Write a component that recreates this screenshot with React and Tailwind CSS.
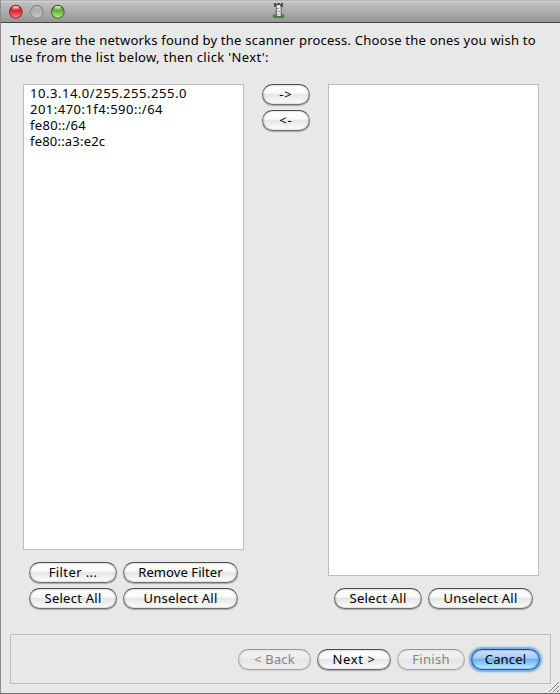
import React from "react";

const variants = {
  normal: "border-[#707070] border-t-[#4c4c4c] text-black bg-[linear-gradient(#ffffff_0%,#fafafa_42%,#e6e6e6_50%,#f2f2f2_75%,#ffffff_100%)] shadow-[0_1px_1px_rgba(0,0,0,0.28),inset_0_0_2px_rgba(0,0,0,0.4)]",
  disabled: "border-[#aaaaaa] border-t-[#989898] text-[#858585] bg-[linear-gradient(#f1f1f1_0%,#eeeeee_42%,#e5e5e5_50%,#ebebeb_75%,#f2f2f2_100%)] shadow-[0_1px_1px_rgba(0,0,0,0.12),inset_0_0_2px_rgba(0,0,0,0.15)]",
  focused: "border-[#2f5da6] border-t-[#2344a8] text-black bg-[linear-gradient(#d3e5fa_0%,#a5cbf5_42%,#6fb0f3_50%,#94cffb_75%,#c8f8ff_100%)] shadow-[0_0_2px_2px_#78a9dc,inset_0_0_2px_#2a5fbb]",
};

function Button({ children, width, variant = "normal", text = "" }) {
  return (
    <button
      disabled={variant === "disabled"}
      className={`flex h-[21px] shrink-0 items-center justify-center rounded-full border pb-[2px] whitespace-pre ${width} ${variants[variant]}`}
    >
      <span className={text}>{children}</span>
    </button>
  );
}

function Light({ color }) {
  return (
    <svg className="h-[15px] w-[15px]" viewBox="0 0 15 15">
      <defs>
        <linearGradient id={`${color.name}-body`} x1="0" y1="0" x2="0" y2="1">
          <stop offset="0" stopColor={color.dark} />
          <stop offset="0.5" stopColor={color.mid} />
          <stop offset="1" stopColor={color.light} />
        </linearGradient>
        <linearGradient id={`${color.name}-shine`} x1="0" y1="0" x2="0" y2="1">
          <stop offset="0" stopColor="#fff" stopOpacity={color.shine} />
          <stop offset="1" stopColor="#fff" stopOpacity="0" />
        </linearGradient>
      </defs>
      <circle cx="7.8" cy="8.2" r="6.8" fill="#fff" opacity="0.3" />
      <circle cx="7.8" cy="7.8" r="6.4" fill={`url(#${color.name}-body)`} stroke={color.edge} strokeWidth="1.1" />
      <ellipse cx="7.8" cy="4.3" rx="3.5" ry="2.3" fill={`url(#${color.name}-shine)`} />
    </svg>
  );
}

const lights = [
  { name: "close", dark: "#a60e18", mid: "#e92c34", light: "#ff8585", edge: "#8a3038", shine: 0.95 },
  { name: "minimize", dark: "#a0a0a0", mid: "#b1b1b1", light: "#c9c9c9", edge: "#858585", shine: 0.3 },
  { name: "zoom", dark: "#397c18", mid: "#70b93a", light: "#c4f27e", edge: "#3e6a2b", shine: 0.95 },
];

function TowerIcon() {
  return (
    <svg className="h-[17px] w-[14px]" viewBox="0 0 14 17">
      <path d="M2 1h2v1h1V1h3v1h1V1h2v4H2z" fill="#505050" />
      <path d="M4 4h5l1 10H3z" fill="#bcbcbc" />
      <path d="M4 5h1v9H3z" fill="#777" />
      <path d="M5 3h3v11H5z" fill="#e4e4e4" />
      <path d="M9 5h1v9H9z" fill="#777" />
      <path d="M5 6h2v1H5zM6 9h2v1H6zM5 12h2v1H5z" fill="#999" />
      <path d="M2 14h9v2H2z" fill="#626a5d" />
      <circle cx="2.5" cy="14" r="1.8" fill="#318c22" />
      <circle cx="10.8" cy="14" r="1.8" fill="#318c22" />
    </svg>
  );
}

const networks = [
  { label: "10.3.14.0/255.255.255.0", tracking: "tracking-[0.53px]" },
  { label: "201:470:1f4:590::/64", tracking: "tracking-[0.48px]" },
  { label: "fe80::/64", tracking: "tracking-[0.3px]" },
  { label: "fe80::a3:e2c", tracking: "tracking-[0.2px]" },
];

export default function App() {
  return (
    <div className="flex h-[694px] w-[560px] flex-col overflow-hidden border-b border-l border-b-[#6a6a6a] border-l-[#8d8d8d] bg-[#e8e8e8] font-['Noto_Sans','Open_Sans',sans-serif] text-[13px] leading-4 text-black">
      <header className="grid h-[23px] shrink-0 grid-cols-[271px_14px_1fr] items-start border-t border-b border-t-[#b5b5b5] border-b-[#454545] bg-[linear-gradient(#d5d5d5_0px,#bfbfbf_2px,#969696_21px)]">
        <div className="flex gap-[6px] pt-[3px] pl-[7px]">
          {lights.map((color) => <Light key={color.name} color={color} />)}
        </div>
        <div className="pt-px"><TowerIcon /></div>
      </header>

      <p className="mt-[9px] ml-[9px] h-[34px] leading-[17px] whitespace-nowrap">
        <span className="tracking-[0.225px]">These are the networks found by the scanner process. Choose the ones you wish to</span>
        <br />
        <span className="tracking-[0.335px]">use from the list below, then click 'Next':</span>
      </p>

      <main className="mt-[18px] flex h-[526px] shrink-0 pl-[22px]">
        <section className="w-[221px]">
          <ul className="h-[466px] border border-[#bdbdbd] bg-white pl-[6px]">
            {networks.map((network) => (
              <li key={network.label} className="h-4 whitespace-nowrap"><span className={network.tracking}>{network.label}</span></li>
            ))}
          </ul>
          <div className="mt-[12px] ml-[6px] flex flex-wrap gap-x-[6px] gap-y-[5px]">
            <Button width="w-[88px]" text="tracking-[0.4px]">Filter ...</Button>
            <Button width="w-[115px]" text="tracking-[0.08px]">Remove Filter</Button>
            <Button width="w-[88px]" text="tracking-[0.25px]">Select All</Button>
            <Button width="w-[115px]" text="tracking-[0.25px]">Unselect All</Button>
          </div>
        </section>
        <div className="ml-[18px] flex flex-col gap-[5px]">
          <Button width="w-[48px]" text="tracking-[1px]">-&gt;</Button>
          <Button width="w-[48px]" text="tracking-[1px]">&lt;-</Button>
        </div>
        <section className="ml-[18px] w-[211px]">
          <div className="h-[492px] border border-[#bdbdbd] bg-white" />
          <div className="mt-[12px] ml-[6px] flex gap-[6px]">
            <Button width="w-[88px]" text="tracking-[0.25px]">Select All</Button>
            <Button width="w-[105px]" text="tracking-[0.25px]">Unselect All</Button>
          </div>
        </section>
      </main>

      <footer className="mt-[24px] ml-[9px] flex h-[50px] w-[541px] shrink-0 justify-end gap-[6px] border border-[#bdbdbd] pt-[14px] pr-[10px]">
        <Button width="w-[73px]" variant="disabled" text="tracking-[0.15px]">&lt; Back</Button>
        <Button width="w-[74px]" text="tracking-[0.6px]">Next &gt;</Button>
        <Button width="w-[68px]" variant="disabled" text="tracking-[0.3px]">Finish</Button>
        <Button width="w-[69px]" variant="focused" text="tracking-[0.15px]">Cancel</Button>
      </footer>
      <svg className="mt-[-3px] ml-auto h-[12px] w-[12px] shrink-0" viewBox="0 0 12 12">
        <path d="M1 11L11 1M5 11L11 5M9 11L11 9" stroke="#777" strokeWidth="1" />
        <path d="M2 11L11 2M6 11L11 6" stroke="#fff" strokeWidth="0.7" />
      </svg>
    </div>
  );
}
